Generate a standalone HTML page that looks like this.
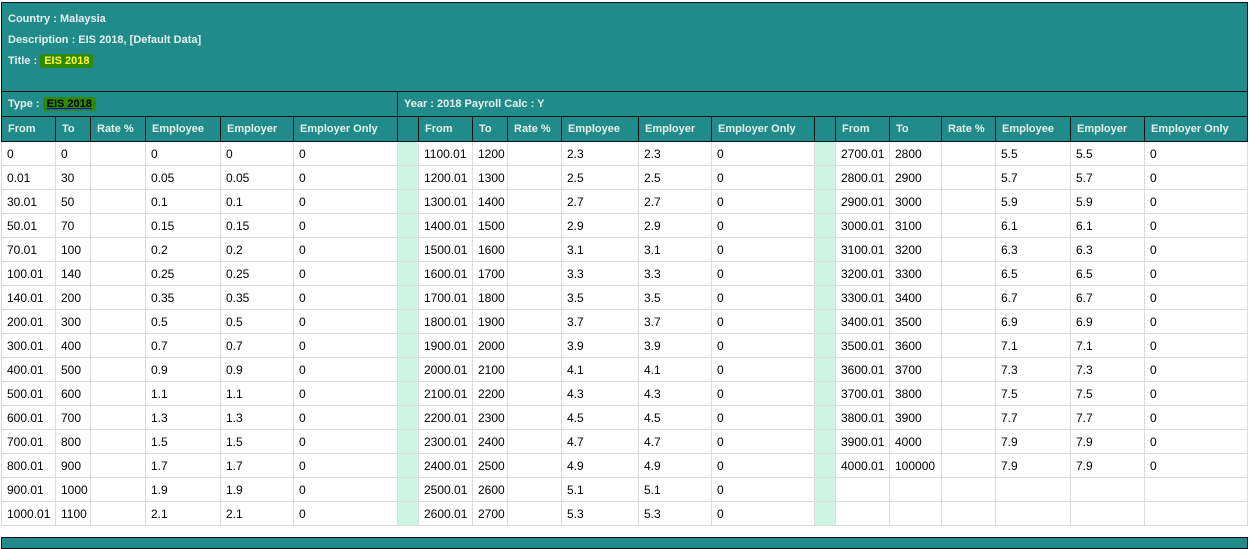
<!DOCTYPE html>
<html><head><meta charset="utf-8"><style>
html,body{margin:0;padding:0;background:#fff;width:1250px;height:541px;overflow:hidden;font-family:"Liberation Sans",Arial,sans-serif;}
table{position:absolute;left:1px;top:2px;border-collapse:collapse;table-layout:fixed;width:1246px;}
td{padding:0 0 0 5px;white-space:nowrap;overflow:hidden;font-size:12px;color:#000;border:1px solid #dcdcdc;height:23px;}
tr.top td{background:#218b8b;border:1px solid #111;color:#e6f2f2;font-weight:bold;font-size:11px;vertical-align:top;padding:6px 0 0 6px;height:82px;line-height:21px;}
tr.type td{background:#218b8b;border:1px solid #111;color:#e6f2f2;font-weight:bold;font-size:11px;height:24px;padding-left:6px;}
tr.hd td{background:#218b8b;border:1px solid #111;color:#e6f2f2;font-weight:bold;font-size:11px;height:24px;padding-left:6px;}
td.g{background:#ccf5e3;padding:0;}
.hl{background:#2f8a00;color:#ffff33;padding:1px 4px;border-radius:3px;}
.hl2{background:#2f8a00;color:#000;padding:1px 4px;text-decoration:underline;text-decoration-color:#00f;border-radius:3px;}
.bar{position:absolute;left:1px;top:537px;width:1245px;height:10px;background:#218b8b;border:1px solid #111;}
</style></head><body>
<table>
<colgroup><col style="width:54px"><col style="width:35px"><col style="width:55px"><col style="width:75px"><col style="width:73px"><col style="width:104px"><col style="width:21px"><col style="width:54px"><col style="width:35px"><col style="width:54px"><col style="width:77px"><col style="width:73px"><col style="width:103px"><col style="width:21px"><col style="width:54px"><col style="width:52px"><col style="width:54px"><col style="width:75px"><col style="width:74px"><col style="width:103px"></colgroup>
<tr class="top"><td colspan="20">Country : Malaysia<br>Description : EIS 2018, [Default Data]<br>Title : <span class="hl">EIS 2018</span></td></tr>
<tr class="type"><td colspan="6">Type : <span class="hl2">EIS 2018</span></td><td colspan="14">Year : 2018 Payroll Calc : Y</td></tr>
<tr class="hd"><td>From</td><td>To</td><td>Rate %</td><td>Employee</td><td>Employer</td><td>Employer Only</td><td></td><td>From</td><td>To</td><td>Rate %</td><td>Employee</td><td>Employer</td><td>Employer Only</td><td></td><td>From</td><td>To</td><td>Rate %</td><td>Employee</td><td>Employer</td><td>Employer Only</td></tr>
<tr><td>0</td><td>0</td><td></td><td>0</td><td>0</td><td>0</td><td class="g"></td><td>1100.01</td><td>1200</td><td></td><td>2.3</td><td>2.3</td><td>0</td><td class="g"></td><td>2700.01</td><td>2800</td><td></td><td>5.5</td><td>5.5</td><td>0</td></tr>
<tr><td>0.01</td><td>30</td><td></td><td>0.05</td><td>0.05</td><td>0</td><td class="g"></td><td>1200.01</td><td>1300</td><td></td><td>2.5</td><td>2.5</td><td>0</td><td class="g"></td><td>2800.01</td><td>2900</td><td></td><td>5.7</td><td>5.7</td><td>0</td></tr>
<tr><td>30.01</td><td>50</td><td></td><td>0.1</td><td>0.1</td><td>0</td><td class="g"></td><td>1300.01</td><td>1400</td><td></td><td>2.7</td><td>2.7</td><td>0</td><td class="g"></td><td>2900.01</td><td>3000</td><td></td><td>5.9</td><td>5.9</td><td>0</td></tr>
<tr><td>50.01</td><td>70</td><td></td><td>0.15</td><td>0.15</td><td>0</td><td class="g"></td><td>1400.01</td><td>1500</td><td></td><td>2.9</td><td>2.9</td><td>0</td><td class="g"></td><td>3000.01</td><td>3100</td><td></td><td>6.1</td><td>6.1</td><td>0</td></tr>
<tr><td>70.01</td><td>100</td><td></td><td>0.2</td><td>0.2</td><td>0</td><td class="g"></td><td>1500.01</td><td>1600</td><td></td><td>3.1</td><td>3.1</td><td>0</td><td class="g"></td><td>3100.01</td><td>3200</td><td></td><td>6.3</td><td>6.3</td><td>0</td></tr>
<tr><td>100.01</td><td>140</td><td></td><td>0.25</td><td>0.25</td><td>0</td><td class="g"></td><td>1600.01</td><td>1700</td><td></td><td>3.3</td><td>3.3</td><td>0</td><td class="g"></td><td>3200.01</td><td>3300</td><td></td><td>6.5</td><td>6.5</td><td>0</td></tr>
<tr><td>140.01</td><td>200</td><td></td><td>0.35</td><td>0.35</td><td>0</td><td class="g"></td><td>1700.01</td><td>1800</td><td></td><td>3.5</td><td>3.5</td><td>0</td><td class="g"></td><td>3300.01</td><td>3400</td><td></td><td>6.7</td><td>6.7</td><td>0</td></tr>
<tr><td>200.01</td><td>300</td><td></td><td>0.5</td><td>0.5</td><td>0</td><td class="g"></td><td>1800.01</td><td>1900</td><td></td><td>3.7</td><td>3.7</td><td>0</td><td class="g"></td><td>3400.01</td><td>3500</td><td></td><td>6.9</td><td>6.9</td><td>0</td></tr>
<tr><td>300.01</td><td>400</td><td></td><td>0.7</td><td>0.7</td><td>0</td><td class="g"></td><td>1900.01</td><td>2000</td><td></td><td>3.9</td><td>3.9</td><td>0</td><td class="g"></td><td>3500.01</td><td>3600</td><td></td><td>7.1</td><td>7.1</td><td>0</td></tr>
<tr><td>400.01</td><td>500</td><td></td><td>0.9</td><td>0.9</td><td>0</td><td class="g"></td><td>2000.01</td><td>2100</td><td></td><td>4.1</td><td>4.1</td><td>0</td><td class="g"></td><td>3600.01</td><td>3700</td><td></td><td>7.3</td><td>7.3</td><td>0</td></tr>
<tr><td>500.01</td><td>600</td><td></td><td>1.1</td><td>1.1</td><td>0</td><td class="g"></td><td>2100.01</td><td>2200</td><td></td><td>4.3</td><td>4.3</td><td>0</td><td class="g"></td><td>3700.01</td><td>3800</td><td></td><td>7.5</td><td>7.5</td><td>0</td></tr>
<tr><td>600.01</td><td>700</td><td></td><td>1.3</td><td>1.3</td><td>0</td><td class="g"></td><td>2200.01</td><td>2300</td><td></td><td>4.5</td><td>4.5</td><td>0</td><td class="g"></td><td>3800.01</td><td>3900</td><td></td><td>7.7</td><td>7.7</td><td>0</td></tr>
<tr><td>700.01</td><td>800</td><td></td><td>1.5</td><td>1.5</td><td>0</td><td class="g"></td><td>2300.01</td><td>2400</td><td></td><td>4.7</td><td>4.7</td><td>0</td><td class="g"></td><td>3900.01</td><td>4000</td><td></td><td>7.9</td><td>7.9</td><td>0</td></tr>
<tr><td>800.01</td><td>900</td><td></td><td>1.7</td><td>1.7</td><td>0</td><td class="g"></td><td>2400.01</td><td>2500</td><td></td><td>4.9</td><td>4.9</td><td>0</td><td class="g"></td><td>4000.01</td><td>100000</td><td></td><td>7.9</td><td>7.9</td><td>0</td></tr>
<tr><td>900.01</td><td>1000</td><td></td><td>1.9</td><td>1.9</td><td>0</td><td class="g"></td><td>2500.01</td><td>2600</td><td></td><td>5.1</td><td>5.1</td><td>0</td><td class="g"></td><td></td><td></td><td></td><td></td><td></td><td></td></tr>
<tr><td>1000.01</td><td>1100</td><td></td><td>2.1</td><td>2.1</td><td>0</td><td class="g"></td><td>2600.01</td><td>2700</td><td></td><td>5.3</td><td>5.3</td><td>0</td><td class="g"></td><td></td><td></td><td></td><td></td><td></td><td></td></tr>
</table>
<div class="bar"></div>
</body></html>
